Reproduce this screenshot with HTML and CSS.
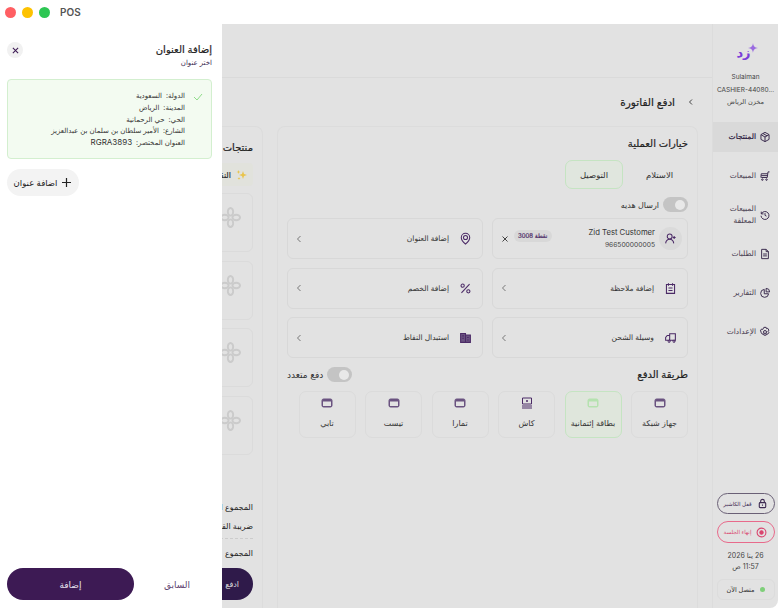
FILE: index.html
```html
<!DOCTYPE html>
<html lang="ar">
<head>
    <meta charset="UTF-8">
    <title>POS</title>
    <link rel="stylesheet" href="styles.css">
</head>
<body>

<div class="titlebar">
    <span class="dot dot-red"></span>
    <span class="dot dot-yellow"></span>
    <span class="dot dot-green"></span>
    <span class="app-name">POS</span>
</div>

<div class="app" dir="rtl">
    <!-- Side navigation -->
    <aside class="sidebar">
        <div class="logo">
            <span>زد</span>
            <svg class="logo-plus" width="10" height="10" viewBox="0 0 10 10"><path d="M5 0c.3 3 1.500 4.600 5 5-3.500.4-4.700 2-5 5-.3-3-1.500-4.600-5-5 3.500-.4 4.700-2 5-5z" fill="#9a6be0"/></svg>
        </div>
        <div class="user-name">Sulaiman</div>
        <div class="user-name user-code">CASHIER-44080...</div>
        <div class="user-name">مخزن الرياض</div>

        <nav class="nav">
            <a class="nav-item active">
                <svg class="nav-icon" viewBox="0 0 16 16"><path d="M8 1.800l5.400 3v6.400L8 14.200l-5.400-3V4.800zM2.800 5L8 8l5.200-3M8 8v6M5.300 3.400l5.400 3"/></svg>
                <span>المنتجات</span>
            </a>
            <a class="nav-item">
                <svg class="nav-icon" viewBox="0 0 16 16"><path d="M14 2.500h-2l-1 7.500H3M3 5h8.500M3 5l-.5 5M3 7.500h8"/><circle cx="4.500" cy="12.800" r="1"/><circle cx="10" cy="12.800" r="1"/></svg>
                <span>المبيعات</span>
            </a>
            <a class="nav-item">
                <svg class="nav-icon" viewBox="0 0 16 16"><path d="M3 3.500v3h3M3.200 6.400A5.300 5.300 0 1 1 2.700 9M8 5.500V8.500l2 1"/></svg>
                <span>المبيعات<br>المعلقة</span>
            </a>
            <a class="nav-item">
                <svg class="nav-icon" viewBox="0 0 16 16"><path d="M3.500 1.800h6l3 3v9.400h-9zM9.500 1.800v3h3M5.500 8h5M5.500 10.500h5"/></svg>
                <span>الطلبات</span>
            </a>
            <a class="nav-item">
                <svg class="nav-icon" viewBox="0 0 16 16"><path d="M7 3.200a5.300 5.300 0 1 0 5.800 5.800H7zM9.500 1.800a4.800 4.800 0 0 1 4.700 4.700H9.500z"/></svg>
                <span>التقارير</span>
            </a>
            <a class="nav-item">
                <svg class="nav-icon" viewBox="0 0 16 16"><path d="M6.500 1.800h3l.5 1.800 1.700-.5 1.500 2.500-1.300 1.400 1.300 1.400-1.500 2.500-1.700-.5-.5 1.800h-3l-.5-1.800-1.700.5-1.500-2.500L3.100 8 1.800 6.600l1.500-2.500 1.700.5z"/><circle cx="8" cy="8" r="2"/></svg>
                <span>الإعدادات</span>
            </a>
        </nav>

        <div class="side-bottom">
            <button class="side-pill pill-lock">
                <svg width="11" height="11" viewBox="0 0 12 12" fill="none" stroke="#3d2a52" stroke-width="1.200"><rect x="2.500" y="5" width="7" height="5.500" rx="1"/><path d="M4 5V3.500a2 2 0 0 1 4 0V5M6 7v1.500"/></svg>
                <span>قفل الكاشير</span>
            </button>
            <button class="side-pill pill-end">
                <svg width="11" height="11" viewBox="0 0 12 12" fill="none" stroke="#d9466f" stroke-width="1.200"><circle cx="6" cy="6" r="4.800"/><circle cx="6" cy="6" r="1.800" fill="#d9466f"/></svg>
                <span>إنهاء الجلسة</span>
            </button>
            <div class="date-line">26 ينا 2026</div>
            <div class="date-line">11:57 ص</div>
            <div class="status">
                <span class="status-dot"></span>
                <span>متصل الآن</span>
            </div>
        </div>
    </aside>

    <!-- Checkout screen -->
    <main class="content">
        <div class="topbar"></div>
        <div class="page-title">
            <svg width="6" height="8" viewBox="0 0 6 8" fill="none" stroke="#444" stroke-width="1"><path d="M4 1.500L1.500 4 4 6.500"/></svg>
            <h1>ادفع الفاتورة</h1>
        </div>
        <div class="panels">
            <section class="panel panel-ops">
                <h2>خيارات العملية</h2>
                <div class="tabs">
                    <div class="tab">الاستلام</div>
                    <div class="tab tab-on">التوصيل</div>
                </div>
                <div class="gift-row">
                    <span class="toggle"><i></i></span>
                    <span>ارسال هديه</span>
                </div>
                <div class="option-grid">
                    <div class="option">
                        <span class="customer-icon">
                            <svg class="opt-icon" viewBox="0 0 16 16"><circle cx="7" cy="5.500" r="3"/><path d="M2 14c.4-3 2.400-5 5-5s4.600 2 5 5M12.500 5v3.500M10.800 6.800h3.500"/></svg>
                        </span>
                        <div class="customer-text">
                            <div class="customer-name">Zid Test Customer</div>
                            <div class="customer-phone">966500000005</div>
                        </div>
                        <span class="points">نقطة 3008</span>
                        <svg class="remove" width="8" height="8" viewBox="0 0 8 8" stroke="#444" stroke-width="1"><path d="M1.500 1.500l5 5M6.500 1.500l-5 5"/></svg>
                    </div>
                    <div class="option">
                        <svg class="opt-icon" viewBox="0 0 16 16"><path d="M8 14.800C5 12.500 2.800 10 2.800 6.800a5.200 5.200 0 0 1 10.400 0c0 3.200-2.200 5.700-5.200 8z"/><circle cx="8" cy="6.800" r="2.500"/></svg>
                        <span class="option-label">إضافة العنوان</span>
                        <svg class="chev" width="6" height="8" viewBox="0 0 6 8" fill="none" stroke="#777" stroke-width="1"><path d="M4.500 1L1.500 4l3 3"/></svg>
                    </div>
                    <div class="option">
                        <svg class="opt-icon" viewBox="0 0 16 16"><path d="M3 3h10v11H3zM5.500 1.500v3M10.500 1.500v3M5.500 7.500h5M5.500 10.500h5"/></svg>
                        <span class="option-label">إضافة ملاحظة</span>
                        <svg class="chev" width="6" height="8" viewBox="0 0 6 8" fill="none" stroke="#777" stroke-width="1"><path d="M4.500 1L1.500 4l3 3"/></svg>
                    </div>
                    <div class="option">
                        <svg class="opt-icon" viewBox="0 0 16 16"><path d="M13 2.500L3 13.500"/><circle cx="4.500" cy="4.500" r="2"/><circle cx="11.500" cy="11.500" r="2"/></svg>
                        <span class="option-label">إضافة الخصم</span>
                        <svg class="chev" width="6" height="8" viewBox="0 0 6 8" fill="none" stroke="#777" stroke-width="1"><path d="M4.500 1L1.500 4l3 3"/></svg>
                    </div>
                    <div class="option">
                        <svg class="opt-icon" viewBox="0 0 16 16"><path d="M14 3.500H7v8h7zM7 5.500H4L2 8v3.500h5M5 12.500a1.300 1.300 0 1 0 0-.1M11 12.500a1.300 1.300 0 1 0 0-.1"/></svg>
                        <span class="option-label">وسيلة الشحن</span>
                        <svg class="chev" width="6" height="8" viewBox="0 0 6 8" fill="none" stroke="#777" stroke-width="1"><path d="M4.500 1L1.500 4l3 3"/></svg>
                    </div>
                    <div class="option">
                        <svg class="opt-icon opt-solid" viewBox="0 0 16 16"><path d="M2 3h6v11H2zM8 5h6v9H8zM4 6h2M4 9h2M10 8h2M10 11h2"/></svg>
                        <span class="option-label">استبدال النقاط</span>
                        <svg class="chev" width="6" height="8" viewBox="0 0 6 8" fill="none" stroke="#777" stroke-width="1"><path d="M4.500 1L1.500 4l3 3"/></svg>
                    </div>
                </div>

                <div class="pay-head">
                    <h2>طريقة الدفع</h2>
                    <div class="multi-pay">
                        <span class="toggle"><i></i></span>
                        <span>دفع متعدد</span>
                    </div>
                </div>
                <div class="pay-grid">
                    <div class="pay-card">
                        <svg class="pay-icon" viewBox="0 0 12 10"><rect x="1" y="1" width="10" height="8" rx="1.500"/><rect x="2" y="3.500" width="8" height="4.500" fill="#e2e2e2" stroke="none"/></svg>
                        <span>جهاز شبكة</span>
                    </div>
                    <div class="pay-card pay-on">
                        <svg class="pay-icon" viewBox="0 0 12 10"><rect x="1" y="1" width="10" height="8" rx="1.500"/><rect x="2" y="3.500" width="8" height="4.500" fill="#dfe6dc" stroke="none"/></svg>
                        <span>بطاقة إئتمانية</span>
                    </div>
                    <div class="pay-card">
                        <svg class="pay-icon pay-cash" viewBox="0 0 12 12"><path d="M1.500 1h9v6h-9zM1 9h10M1 11h10M6 3v2M5 4h2"/></svg>
                        <span>كاش</span>
                    </div>
                    <div class="pay-card">
                        <svg class="pay-icon" viewBox="0 0 12 10"><rect x="1" y="1" width="10" height="8" rx="1.500"/><rect x="2" y="3.500" width="8" height="4.500" fill="#e2e2e2" stroke="none"/></svg>
                        <span>تمارا</span>
                    </div>
                    <div class="pay-card">
                        <svg class="pay-icon" viewBox="0 0 12 10"><rect x="1" y="1" width="10" height="8" rx="1.500"/><rect x="2" y="3.500" width="8" height="4.500" fill="#e2e2e2" stroke="none"/></svg>
                        <span>تيست</span>
                    </div>
                    <div class="pay-card">
                        <svg class="pay-icon" viewBox="0 0 12 10"><rect x="1" y="1" width="10" height="8" rx="1.500"/><rect x="2" y="3.500" width="8" height="4.500" fill="#e2e2e2" stroke="none"/></svg>
                        <span>تابي</span>
                    </div>
                </div>
            </section>

            <section class="panel panel-products">
                <h2>منتجات</h2>
                <div class="points-strip">
                    <svg width="12" height="12" viewBox="0 0 12 12" fill="#e9c44a"><path d="M7 2l1 3 3 1-3 1-1 3-1-3-3-1 3-1zM2.500 1l.5 1.500L4.500 3 3 3.500 2.500 5 2 3.500.5 3 2 2.500zM3 8l.4 1.100 1.100.4-1.100.4L3 11l-.4-1.100-1.100-.4 1.100-.4z"/></svg>
                    <span>النقاط</span>
                </div>
                <div class="product-list">
                    <div class="product"><svg class="knot" viewBox="0 0 22 22"><ellipse cx="11" cy="5" rx="2.800" ry="4"/><ellipse cx="11" cy="17" rx="2.800" ry="4"/><ellipse cx="5" cy="11" rx="4" ry="2.800"/><ellipse cx="17" cy="11" rx="4" ry="2.800"/></svg></div>
                    <div class="product"><svg class="knot" viewBox="0 0 22 22"><ellipse cx="11" cy="5" rx="2.800" ry="4"/><ellipse cx="11" cy="17" rx="2.800" ry="4"/><ellipse cx="5" cy="11" rx="4" ry="2.800"/><ellipse cx="17" cy="11" rx="4" ry="2.800"/></svg></div>
                    <div class="product"><svg class="knot" viewBox="0 0 22 22"><ellipse cx="11" cy="5" rx="2.800" ry="4"/><ellipse cx="11" cy="17" rx="2.800" ry="4"/><ellipse cx="5" cy="11" rx="4" ry="2.800"/><ellipse cx="17" cy="11" rx="4" ry="2.800"/></svg></div>
                    <div class="product"><svg class="knot" viewBox="0 0 22 22"><ellipse cx="11" cy="5" rx="2.800" ry="4"/><ellipse cx="11" cy="17" rx="2.800" ry="4"/><ellipse cx="5" cy="11" rx="4" ry="2.800"/><ellipse cx="17" cy="11" rx="4" ry="2.800"/></svg></div>
                </div>
                <div class="totals">
                    <div class="total-row">المجموع الفرعي</div>
                    <div class="total-row">ضريبة القيمة المضافة</div>
                    <div class="total-row total-last">المجموع</div>
                </div>
                <button class="pay-btn">ادفع</button>
            </section>
        </div>
    </main>

    <!-- Address drawer, sits over the page -->
    <div class="drawer">
        <div class="drawer-head">
            <div>
                <h3>إضافة العنوان</h3>
                <p>اختر عنوان</p>
            </div>
            <button class="close-btn">
                <svg width="7" height="7" viewBox="0 0 8 8" stroke="#3d1a54" stroke-width="1.200"><path d="M1 1l6 6M7 1L1 7"/></svg>
            </button>
        </div>
        <div class="address-box">
            <svg class="check" width="10" height="8" viewBox="0 0 10 8" fill="none" stroke="#8fdc8a" stroke-width="1"><path d="M1 4l3 3 5-6"/></svg>
            <div class="address-lines">
                <div>الدولة:&nbsp; السعودية</div>
                <div>المدينة:&nbsp; الرياض</div>
                <div>الحي:&nbsp; حي الرحمانية</div>
                <div>الشارع:&nbsp; الأمير سلطان بن سلمان بن عبدالعزيز</div>
                <div>العنوان المختصر:&nbsp; <span class="addr-code">RGRA3893</span></div>
            </div>
        </div>
        <button class="add-address">
            <svg width="11" height="11" viewBox="0 0 11 11" stroke="#222" stroke-width="1.200"><path d="M5.500 1v9M1 5.500h9"/></svg>
            <span>اضافة عنوان</span>
        </button>
        <div class="drawer-foot">
            <button class="btn-back">السابق</button>
            <button class="btn-add">إضافة</button>
        </div>
    </div>
</div>

</body>
</html>
```

FILE: styles.css
```css
* {
    margin: 0;
    padding: 0;
    box-sizing: border-box;
}

body {
    font-family: Inter, "DejaVu Sans", sans-serif;
    width: 778px;
    height: 608px;
    overflow: hidden;
    background-color: #fff;
    color: #333;
}

button {
    font-family: inherit;
    border: none;
    background: none;
}

h1, h2, h3 {
    font-weight: 400;
    -webkit-text-stroke: 0.2px currentColor;
}

/* Window title bar */
.titlebar {
    height: 24px;
    display: flex;
    align-items: center;
    padding-left: 5px;
    background-color: #fff;
    position: relative;
    z-index: 2;
}

.dot {
    width: 11px;
    height: 11px;
    border-radius: 50%;
    margin-right: 6px;
}

.dot-red { background-color: #ff5f63; }
.dot-yellow { background-color: #fdc201; }
.dot-green { background-color: #2dc653; }

.app-name {
    margin-left: 4px;
    font-size: 10px;
    font-weight: 600;
    color: #555;
}

.app {
    height: 584px;
    display: flex;
    background-color: #e2e2e2;
    border-bottom-right-radius: 8px;
}

/* Sidebar */
.sidebar {
    width: 66px;
    flex-shrink: 0;
    display: flex;
    flex-direction: column;
    align-items: center;
    border-left: 1px solid #dcdcdc;
}

.logo {
    height: 47px;
    width: 100%;
    display: flex;
    justify-content: center;
    align-items: flex-end;
    padding: 0 4px 11px 0;
    color: #7a3fd8;
    font-size: 13px;
    font-weight: 700;
    position: relative;
}

.logo-plus {
    position: absolute;
    top: 19px;
    left: 35px;
}

.user-name {
    font-size: 6.5px;
    line-height: 12.5px;
    color: #444;
    white-space: nowrap;
}

.user-code {
    direction: ltr;
}

.nav {
    width: 100%;
    margin-top: 13px;
}

.nav-item {
    height: 30px;
    margin-bottom: 9.2px;
    display: flex;
    align-items: center;
    gap: 3px;
    padding-right: 7px;
    font-size: 7.5px;
    line-height: 12px;
    color: #4a4152;
    white-space: nowrap;
}

.nav-item.active {
    background-color: #d9d9d9;
    color: #2b1a3d;
    -webkit-text-stroke: 0.2px currentColor;
}

.nav-icon {
    width: 12px;
    height: 12px;
    flex-shrink: 0;
    fill: none;
    stroke: #3a2a4d;
    stroke-width: 1.3;
}

.side-bottom {
    margin-top: auto;
    width: 100%;
    padding: 0 3px 8px 3px;
    display: flex;
    flex-direction: column;
    align-items: center;
}

.side-pill {
    width: 58px;
    height: 21px;
    margin-bottom: 7px;
    border-radius: 11px;
    display: flex;
    align-items: center;
    justify-content: center;
    gap: 5px;
    font-size: 5.5px;
    white-space: nowrap;
}

.pill-lock {
    border: 1px solid #6a6076;
    color: #3d2a52;
}

.pill-end {
    height: 22px;
    border: 1px solid #e86a8b;
    color: #d9466f;
}

.date-line {
    font-size: 7px;
    line-height: 10.5px;
    color: #444;
}

.pill-end + .date-line {
    margin-top: 1px;
}

.status {
    width: 58px;
    height: 21px;
    margin-top: 7px;
    display: flex;
    align-items: center;
    justify-content: center;
    gap: 5px;
    border: 1px solid #dcdcdc;
    border-radius: 6px;
    font-size: 6.5px;
    color: #333;
}

.status-dot {
    width: 5px;
    height: 5px;
    border-radius: 50%;
    background-color: #7fcf7a;
}

/* Main content */
.content {
    flex: 1;
    min-width: 0;
    display: flex;
    flex-direction: column;
}

.topbar {
    height: 54px;
    flex-shrink: 0;
    border-bottom: 1px solid #dadada;
}

.page-title {
    height: 48px;
    flex-shrink: 0;
    display: flex;
    align-items: center;
    gap: 13px;
    padding-right: 18px;
}

.page-title h1 {
    font-size: 10.5px;
    color: #222;
}

.panels {
    flex: 1;
    display: flex;
    gap: 14px;
    padding-right: 14px;
}

.panel {
    border: 1px solid #dcdcdc;
    border-bottom: none;
    border-radius: 8px 8px 0 0;
    padding: 9px;
}

.panel h2 {
    font-size: 10px;
    line-height: 15px;
    color: #222;
}

.panel-ops {
    width: 421px;
    flex-shrink: 0;
}

.panel-products {
    flex: 1;
    min-width: 0;
    position: relative;
}

.panel-products h2 {
    margin-top: 4px;
}

.tabs {
    display: flex;
    margin-top: 9px;
    height: 29px;
    font-size: 8.5px;
    color: #333;
}

.tab {
    width: 58px;
    display: flex;
    align-items: center;
    justify-content: center;
    border-radius: 7px;
}

.tab-on {
    border: 1px solid #c5e4c2;
    background-color: #e0e6de;
}

.tab:first-child {
    width: 65px;
    padding-left: 8px;
}

.gift-row {
    display: flex;
    align-items: center;
    gap: 4px;
    margin-top: 8px;
    height: 15px;
    font-size: 8px;
    color: #333;
}

.toggle {
    width: 25px;
    height: 15px;
    border-radius: 8px;
    background-color: #c4c4c4;
    position: relative;
    display: inline-block;
}

.toggle i {
    position: absolute;
    top: 2.5px;
    right: 3px;
    width: 10px;
    height: 10px;
    border-radius: 50%;
    background-color: #e8e8e8;
}

.option-grid {
    display: grid;
    grid-template-columns: 196px 196px;
    grid-auto-rows: 41px;
    column-gap: 9px;
    row-gap: 8.5px;
    margin-top: 6px;
}

.option {
    display: flex;
    align-items: center;
    gap: 7px;
    padding: 0 5px 0 8px;
    border: 1px solid #d8d8d8;
    border-radius: 6px;
    font-size: 7.5px;
    color: #333;
}

.customer-icon {
    width: 23px;
    height: 23px;
    border-radius: 50%;
    background-color: #dadada;
    display: flex;
    align-items: center;
    justify-content: center;
    margin-left: -3px;
    flex-shrink: 0;
}

.opt-icon {
    width: 13px;
    height: 13px;
    margin-right: 5px;
    margin-left: 3px;
    fill: none;
    stroke: #4b2a66;
    stroke-width: 1.3;
    flex-shrink: 0;
}

.customer-icon .opt-icon {
    margin: 0;
}

.opt-solid {
    fill: #6a5380;
}

.customer-text {
    flex: 1;
}

.customer-name {
    font-size: 7.7px;
    line-height: 12px;
    direction: ltr;
    text-align: right;
}

.customer-phone {
    font-size: 6.7px;
    line-height: 12px;
    color: #444;
    direction: ltr;
    text-align: right;
}

.points {
    background-color: #d8d8d8;
    border-radius: 7px;
    padding: 0 4px;
    height: 12px;
    line-height: 12px;
    font-size: 6px;
    color: #4b2a66;
    -webkit-text-stroke: 0.2px currentColor;
    margin-top: -6px;
    margin-left: -2px;
    white-space: nowrap;
}

.remove {
    flex-shrink: 0;
}

.option-label {
    flex: 1;
}

.chev {
    flex-shrink: 0;
}

.pay-head {
    display: flex;
    justify-content: space-between;
    align-items: center;
    margin-top: 9px;
    height: 15px;
}

.multi-pay {
    display: flex;
    align-items: center;
    gap: 4px;
    font-size: 9px;
}

.pay-grid {
    display: flex;
    gap: 9.5px;
    margin-top: 9px;
}

.pay-card {
    width: 57px;
    height: 47px;
    display: flex;
    flex-direction: column;
    align-items: center;
    gap: 9px;
    padding-top: 5px;
    border: 1px solid #dbdbdb;
    border-radius: 7px;
    font-size: 8px;
    color: #333;
    white-space: nowrap;
}

.pay-on {
    border-color: #c5e4c2;
    background-color: #dfe6dc;
}

.pay-icon {
    width: 12px;
    height: 12px;
    fill: #6a5380;
    stroke: #6a5380;
}

.pay-on .pay-icon {
    fill: #b5e2af;
    stroke: #b5e2af;
}

.pay-cash {
    fill: none;
    stroke: #4b2a66;
}

.points-strip {
    margin-top: 8px;
    height: 23px;
    display: flex;
    align-items: center;
    gap: 5px;
    padding-right: 5px;
    background-color: #e1e2dc;
    border-radius: 4px;
    font-size: 8px;
    color: #333;
    -webkit-text-stroke: 0.2px currentColor;
}

.product-list {
    margin-top: 7px;
    display: flex;
    flex-direction: column;
    gap: 8.7px;
}

.product {
    height: 59px;
    padding: 13px 11px 0 0;
    border: 1px solid #dbdbdb;
    border-radius: 6px;
}

.knot {
    display: block;
    width: 21px;
    height: 21px;
    fill: none;
    stroke: #cbcbcb;
    stroke-width: 2;
}

.totals {
    margin-top: 43px;
    font-size: 8px;
    color: #222;
}

.total-row {
    height: 19px;
    line-height: 19px;
    white-space: nowrap;
}

.total-last {
    margin-top: 1.5px;
    padding-top: 5px;
    border-top: 1px dashed #ccc;
    height: 24px;
}

.pay-btn {
    position: absolute;
    right: 9px;
    left: 9px;
    top: 441px;
    height: 32px;
    padding-right: 14px;
    text-align: right;
    border-radius: 16px;
    background-color: #2f1a4a;
    color: #ddd;
    font-size: 8px;
}

/* Address drawer */
.drawer {
    position: absolute;
    top: 0;
    left: 0;
    width: 222px;
    height: 608px;
    z-index: 1;
    background-color: #fff;
    padding: 42px 10px 8px 7px;
    display: flex;
    flex-direction: column;
}

.drawer-head {
    display: flex;
    justify-content: space-between;
    align-items: flex-start;
}

.drawer-head h3 {
    font-size: 10px;
    line-height: 14px;
    color: #222;
}

.drawer-head p {
    font-size: 7px;
    line-height: 14px;
    color: #3d2a52;
}

.close-btn {
    width: 16px;
    height: 16px;
    border-radius: 50%;
    background-color: #f1f1f1;
    display: flex;
    align-items: center;
    justify-content: center;
}

.address-box {
    margin-top: 9px;
    height: 80px;
    display: flex;
    gap: 8px;
    padding: 10px 5px 0 0;
    background-color: #f3fbf1;
    border: 1px solid #d3efcf;
    border-radius: 4px;
}

.check {
    margin-top: 3px;
    margin-right: 3px;
    flex-shrink: 0;
}

.address-lines {
    font-size: 7px;
    line-height: 11.8px;
    color: #333;
    white-space: nowrap;
}

.addr-code {
    font-size: 8px;
}

.add-address {
    align-self: flex-end;
    margin-top: 10px;
    height: 27px;
    width: 72px;
    border-radius: 14px;
    background-color: #f3f3f3;
    display: flex;
    align-items: center;
    justify-content: center;
    gap: 4px;
    font-size: 8.5px;
    color: #222;
}

.drawer-foot {
    margin-top: auto;
    display: flex;
    align-items: center;
    justify-content: space-between;
}

.btn-back {
    width: 78px;
    padding-left: 8px;
    font-size: 9px;
    color: #5e4470;
}

.btn-add {
    width: 127px;
    height: 32px;
    border-radius: 16px;
    background-color: #3d1a54;
    color: #e8e2ee;
    font-size: 9px;
}
```
